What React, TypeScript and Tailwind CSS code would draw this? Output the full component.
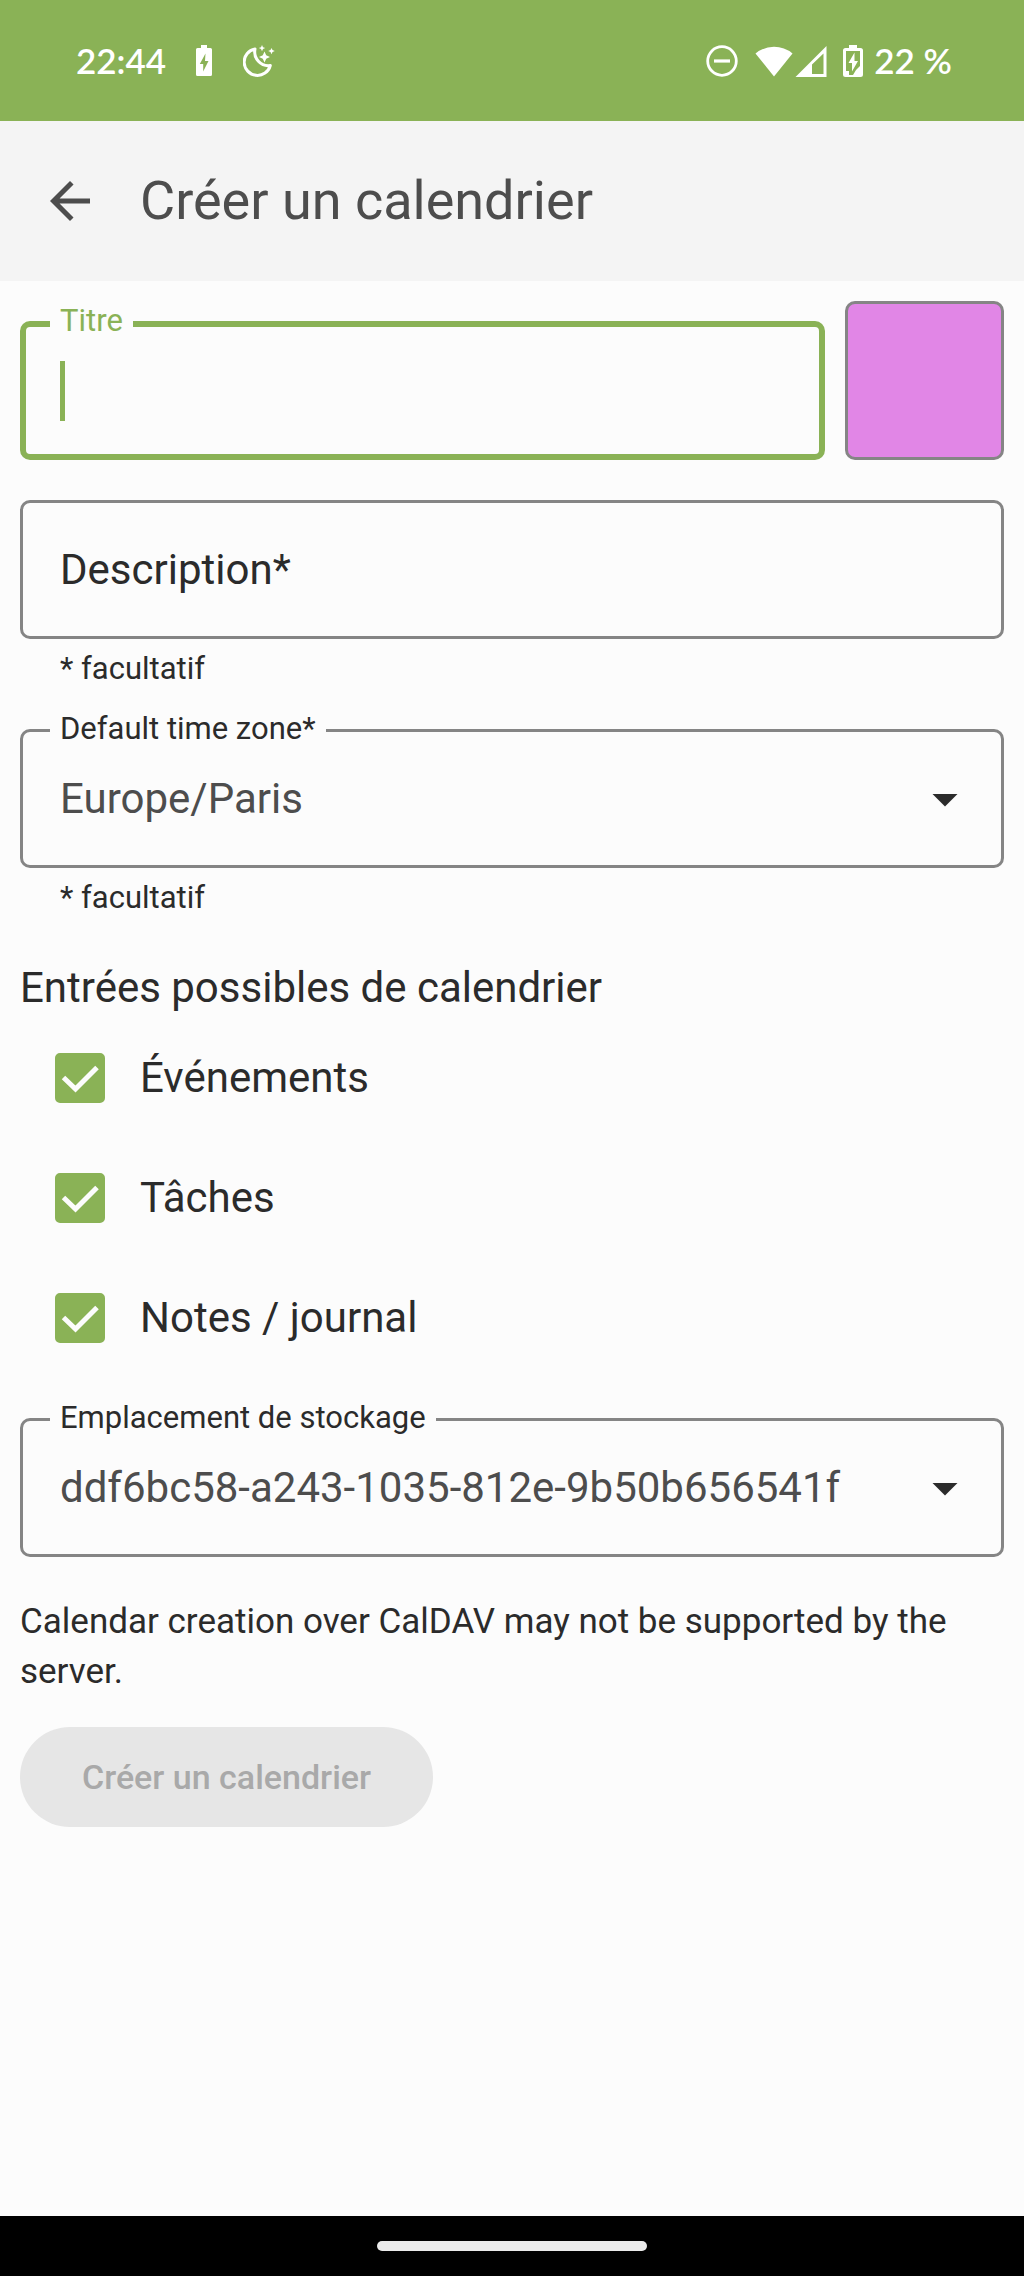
import { useState, type ReactNode } from 'react'

const entryTypes = [
  { id: 'events', label: 'Événements' },
  { id: 'tasks', label: 'Tâches' },
  { id: 'journal', label: 'Notes / journal' },
]

function StatusBar() {
  return (
    <div className="flex h-[121px] shrink-0 items-center justify-between bg-[#8ab256] pr-[72px] pl-[76px] font-[Lato,sans-serif] text-[35px] font-semibold text-white">
      <div className="flex items-center">
        <span>22:44</span>
        <svg className="ml-[30px] h-8 w-4" viewBox="0 0 16 32" fill="currentColor" aria-hidden="true">
          <path
            fillRule="evenodd"
            d="M5 0h6v3h3.500q1.500 0 1.500 1.500v25q0 1.500-1.500 1.500h-13Q0 31 0 29.500v-25Q0 3 1.500 3H5zM9.500 8.500 3.800 19h3.400v7.500L12.500 16H9z"
          />
        </svg>
        <svg className="ml-[31px] size-8" viewBox="0 0 32 32" fill="currentColor" aria-hidden="true">
          <path
            d="M12 4A13.300 13.300 0 1 0 27.300 20.500 13.800 13.800 0 0 1 12 4Z"
            fill="none"
            stroke="currentColor"
            strokeWidth="3"
            strokeLinejoin="round"
          />
          <path d="m21.500 6.500 1.700 3.800 3.800 1.700-3.800 1.700-1.700 3.800-1.700-3.800L16 12l3.800-1.700zM19 0l1 2.200 2.200.8-2.200 1L19 6.200 18 4l-2.200-1L18 2.200zM28.500 3l1 2.100 2.300 1-2.300 1-1 2.200-1-2.200-2.300-1 2.300-1z" />
        </svg>
      </div>
      <div className="flex items-center">
        <svg className="size-8" viewBox="0 0 32 32" fill="none" stroke="currentColor" aria-hidden="true">
          <circle cx="16" cy="16" r="14.300" strokeWidth="2.800" />
          <path d="M8 16h16" strokeWidth="3.200" />
        </svg>
        <svg className="ml-[17px] h-8 w-[38px]" viewBox="0 0 38 32" fill="currentColor" aria-hidden="true">
          <path d="M19 31.500.5 8.500A29 29 0 0 1 37.500 8.500Z" />
        </svg>
        <svg className="ml-[2px] size-8" viewBox="0 0 32 32" fill="currentColor" aria-hidden="true">
          <path fillRule="evenodd" d="M31.500 1v31H.500zM28.500 8.500 17 19.500V29h11.500z" />
        </svg>
        <svg className="ml-[16px] h-[34px] w-5" viewBox="0 0 20 34" fill="currentColor" aria-hidden="true">
          <path
            fillRule="evenodd"
            d="M6 1h8v3h3.500Q20 4 20 6.500v24q0 2.500-2.500 2.500h-15Q0 33 0 30.500v-24Q0 4 2.500 4H6zM3 7v20h3v4h4l3-5 4-4V7z"
          />
          <path d="M11.500 8.500 5.500 19H9v8.500L15 17h-3.500z" />
        </svg>
        <span className="ml-[11px]">22 %</span>
      </div>
    </div>
  )
}

function AppBar() {
  return (
    <header className="flex h-[160px] shrink-0 items-center gap-10 bg-[#f4f4f4] px-10 text-[#4d4d4d]">
      <button type="button" aria-label="Retour">
        <svg className="size-[60px]" viewBox="0 0 24 24" fill="currentColor" aria-hidden="true">
          <path d="M20 11H7.830l5.590-5.590L12 4l-8 8 8 8 1.410-1.410L7.830 13H20v-2z" />
        </svg>
      </button>
      <h1 className="text-[54px] leading-[70px]">Créer un calendrier</h1>
    </header>
  )
}

function FloatingLabel({ htmlFor, children, className }: { htmlFor: string; children: ReactNode; className: string }) {
  return (
    <label
      htmlFor={htmlFor}
      className={`absolute -top-5 left-[30px] bg-[#fcfcfc] px-[10px] text-[31px] leading-10 ${className}`}
    >
      {children}
    </label>
  )
}

function SelectField({ id, label, options }: { id: string; label: string; options: string[] }) {
  return (
    <div className="relative mt-10">
      <select
        id={id}
        className="block h-[139px] w-full appearance-none rounded-[10px] border-3 border-[#858585] bg-transparent pr-[120px] pl-[37px] text-[42px] text-[#4d4d4d] outline-none"
      >
        {options.map((option) => (
          <option key={option}>{option}</option>
        ))}
      </select>
      <FloatingLabel htmlFor={id} className="text-[#2b2b2b]">
        {label}
      </FloatingLabel>
      <svg
        className="pointer-events-none absolute top-10 right-[29px] size-[60px] text-[#2b2b2b]"
        viewBox="0 0 24 24"
        fill="currentColor"
        aria-hidden="true"
      >
        <path d="m7 10 5 5 5-5z" />
      </svg>
    </div>
  )
}

function HelperText() {
  return <p className="mt-[10px] px-10 text-[31px] leading-10">* facultatif</p>
}

function CheckRow({ id, label }: { id: string; label: string }) {
  return (
    <div className="flex h-[120px] items-center gap-[35px] pl-[35px]">
      <span className="relative block size-[50px]">
        <input
          id={id}
          type="checkbox"
          defaultChecked
          className="peer block size-[50px] appearance-none rounded-[5px] border-5 border-[#4d4d4d] checked:border-[#8ab256] checked:bg-[#8ab256]"
        />
        <svg
          className="pointer-events-none absolute inset-0 hidden size-[50px] text-[#fcfcfc] peer-checked:block"
          viewBox="0 0 50 50"
          fill="none"
          stroke="currentColor"
          strokeWidth="5"
          aria-hidden="true"
        >
          <path d="M8.500 24.500 20.500 36 42 14.500" />
        </svg>
      </span>
      <label htmlFor={id} className="text-[42px] leading-[60px]">
        {label}
      </label>
    </div>
  )
}

export default function App() {
  const [title, setTitle] = useState('')
  const [description, setDescription] = useState('')

  return (
    <div className="flex min-h-screen flex-col bg-[#fcfcfc] font-[Roboto,sans-serif] text-[#2b2b2b]">
      <StatusBar />
      <AppBar />

      <main className="flex-1 px-5 pt-5 pb-10">
        <form>
          <div className="flex items-end gap-5">
            <div className="relative flex-1">
              <input
                id="title"
                type="text"
                value={title}
                onChange={(e) => setTitle(e.target.value)}
                className="block h-[139px] w-full rounded-[10px] border-6 border-[#8ab256] bg-transparent px-[34px] text-[42px] caret-[#8ab256] outline-none"
              />
              <FloatingLabel htmlFor="title" className="text-[#8ab256]">
                Titre
              </FloatingLabel>
              {title === '' && (
                <span className="pointer-events-none absolute top-10 left-10 h-[60px] w-[5px] bg-[#8ab256]" />
              )}
            </div>
            <button
              type="button"
              aria-label="Couleur"
              className="size-[159px] shrink-0 rounded-[10px] border-3 border-[#858585] bg-[#e186e6]"
            />
          </div>

          <div className="relative mt-10">
            <input
              id="description"
              type="text"
              value={description}
              onChange={(e) => setDescription(e.target.value)}
              className="block h-[139px] w-full rounded-[10px] border-3 border-[#858585] bg-transparent px-[37px] text-[42px] outline-none"
            />
            {description === '' && (
              <label htmlFor="description" className="absolute top-10 left-10 text-[42px] leading-[60px]">
                Description*
              </label>
            )}
          </div>
          <HelperText />

          <SelectField id="timezone" label="Default time zone*" options={['Europe/Paris']} />
          <HelperText />

          <h2 className="mt-10 text-[42px] leading-[60px]">Entrées possibles de calendrier</h2>
          {entryTypes.map((entry) => (
            <CheckRow key={entry.id} id={entry.id} label={entry.label} />
          ))}

          <SelectField id="storage" label="Emplacement de stockage" options={['ddf6bc58-a243-1035-812e-9b50b656541f']} />

          <p className="mt-10 text-[35px] leading-[50px]">
            Calendar creation over CalDAV may not be supported by the server.
          </p>
          <button
            type="submit"
            disabled
            className="mt-[30px] h-[100px] rounded-full bg-[#e6e6e6] px-[62px] text-[34px] font-medium text-[#a9a9a9]"
          >
            Créer un calendrier
          </button>
        </form>
      </main>

      <div className="flex h-[60px] shrink-0 items-center justify-center bg-black">
        <div className="h-[10px] w-[270px] rounded-full bg-[#ebebeb]" />
      </div>
    </div>
  )
}
